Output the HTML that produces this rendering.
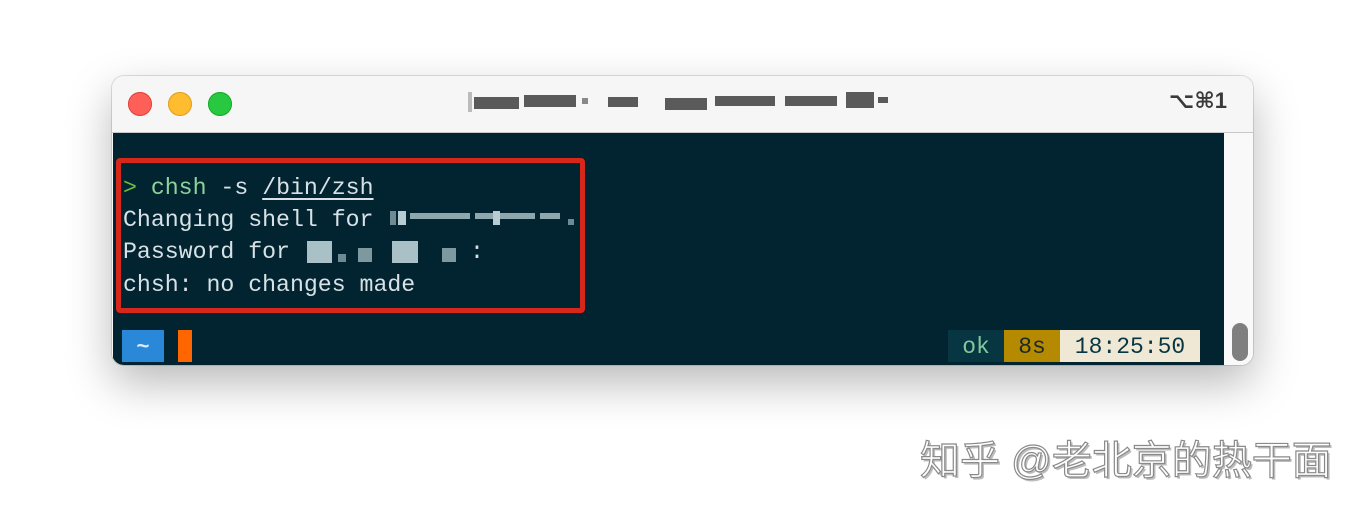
<!DOCTYPE html>
<html><head><meta charset="utf-8"><style>
html,body{margin:0;padding:0;width:1366px;height:514px;background:#fff;overflow:hidden;position:relative;font-family:"Liberation Mono",monospace}
.win{position:absolute;left:112px;top:76px;width:1141px;height:289px;border-radius:12px;background:#f7f7f7;box-shadow:0 18px 45px rgba(0,0,0,.28),0 0 0 1px rgba(0,0,0,.12);overflow:hidden}
.title{position:absolute;left:0;top:0;width:100%;height:56px;background:#f6f6f6;border-bottom:1px solid #c8c8c8}
.dot{position:absolute;top:16px;width:24px;height:24px;border-radius:50%}
.term{position:absolute;left:1px;top:57px;width:1111px;height:232px;background:#022431}
.sb{position:absolute;left:1112px;top:57px;width:29px;height:232px;background:#f9f9f9}
.thumb{position:absolute;left:1120px;top:247px;width:16px;height:38px;border-radius:8px;background:#7f7f7f}
.t{position:absolute;font-size:23.2px;line-height:32px;color:#d8e2e6;white-space:pre}
.box{position:absolute;left:116px;top:158px;width:459px;height:145px;border:5px solid #d7261a;border-radius:4px}
.pix{position:absolute;background:#6e8a92}
.g{position:absolute;background:#5a5a5a}
.wm{position:absolute;left:920px;top:428px;font-family:"Liberation Sans","Noto Sans CJK SC",sans-serif;font-size:40px;color:#fff;-webkit-text-stroke:1.2px #8a8a8a;text-shadow:2px 2px 0 #bdbdbd;white-space:nowrap}
</style></head><body>
<div class="win">
 <div class="title">
  <div class="dot" style="left:16px;background:#fe5f57;box-shadow:inset 0 0 0 1px #e0443e"></div>
  <div class="dot" style="left:56px;background:#febc2e;box-shadow:inset 0 0 0 1px #dea123"></div>
  <div class="dot" style="left:96px;background:#28c840;box-shadow:inset 0 0 0 1px #1aab29"></div>
  <div style="position:absolute;left:1057px;top:12px;font-family:'Liberation Sans','DejaVu Sans',sans-serif;font-weight:bold;font-size:22px;color:#3a3a3a">⌥⌘1</div>
 </div>
 <div class="term"></div>
 <div class="sb"></div>
 <div class="thumb"></div>
</div>
<!-- blurred title -->
<div class="g" style="left:468px;top:92px;width:4px;height:20px;background:#bbb"></div>
<div class="g" style="left:474px;top:97px;width:45px;height:12px"></div>
<div class="g" style="left:524px;top:95px;width:52px;height:12px"></div>
<div class="g" style="left:582px;top:98px;width:6px;height:6px;background:#888"></div>
<div class="g" style="left:608px;top:97px;width:30px;height:10px"></div>
<div class="g" style="left:665px;top:98px;width:42px;height:12px"></div>
<div class="g" style="left:715px;top:96px;width:60px;height:10px"></div>
<div class="g" style="left:785px;top:96px;width:52px;height:10px"></div>
<div class="g" style="left:846px;top:92px;width:28px;height:16px"></div>
<div class="g" style="left:878px;top:97px;width:10px;height:6px"></div>

<div class="box"></div>
<div class="t" style="left:123px;top:172px"><span style="color:#6bbf3c">&gt;</span> <span style="color:#8ed39a">chsh</span> -s <span style="text-decoration:underline;text-underline-offset:4px">/bin/zsh</span></div>
<div class="t" style="left:123px;top:204px">Changing shell for</div>
<div class="t" style="left:123px;top:236px">Password for</div>
<div class="t" style="left:123px;top:269px">chsh: no changes made</div>
<div class="t" style="left:470px;top:236px">:</div>
<!-- pixelated names -->
<div class="pix" style="left:390px;top:211px;width:6px;height:14px"></div>
<div class="pix" style="left:398px;top:211px;width:8px;height:14px;background:#b7cdd2"></div>
<div class="pix" style="left:410px;top:213px;width:60px;height:6px;background:#8ea7ad"></div>
<div class="pix" style="left:475px;top:213px;width:60px;height:6px;background:#8ea7ad"></div>
<div class="pix" style="left:493px;top:211px;width:7px;height:14px;background:#b7cdd2"></div>
<div class="pix" style="left:540px;top:213px;width:20px;height:6px;background:#8ea7ad"></div>
<div class="pix" style="left:568px;top:219px;width:6px;height:6px"></div>
<div class="pix" style="left:307px;top:241px;width:25px;height:22px;background:#a8c0c6"></div>
<div class="pix" style="left:338px;top:254px;width:8px;height:8px"></div>
<div class="pix" style="left:358px;top:248px;width:14px;height:14px;background:#7e989f"></div>
<div class="pix" style="left:392px;top:241px;width:26px;height:22px;background:#a8c0c6"></div>
<div class="pix" style="left:442px;top:248px;width:14px;height:14px;background:#7e989f"></div>

<!-- bottom prompt -->
<div style="position:absolute;left:122px;top:330px;width:42px;height:32px;background:#2a88d8;color:#d9ecff;font-size:22px;line-height:36px;text-align:center;font-weight:bold">~</div>
<div style="position:absolute;left:178px;top:330px;width:14px;height:32px;background:#ff6600"></div>
<div style="position:absolute;left:948px;top:330px;width:56px;height:32px;background:#073642;color:#7fc99a;font-size:23px;line-height:35px;text-align:center">ok</div>
<div style="position:absolute;left:1004px;top:330px;width:56px;height:32px;background:#b58900;color:#1b2a2a;font-size:23px;line-height:35px;text-align:center">8s</div>
<div style="position:absolute;left:1060px;top:330px;width:140px;height:32px;background:#eee8d5;color:#073642;font-size:23px;line-height:35px;text-align:center">18:25:50</div>

<div class="wm">知乎 @老北京的热干面</div>
</body></html>
